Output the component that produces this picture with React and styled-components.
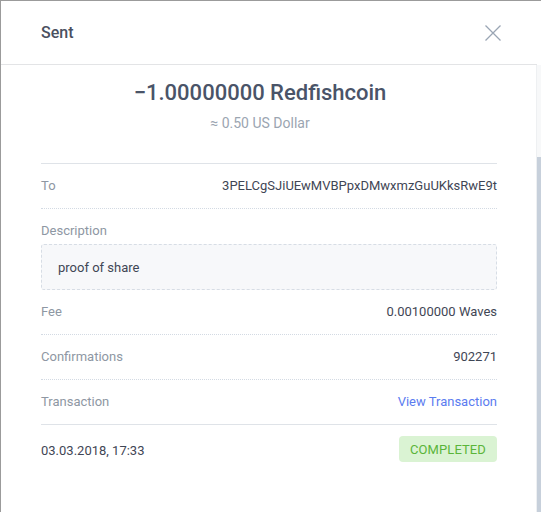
import React from "react";
import styled, { createGlobalStyle } from "styled-components";

const GlobalStyle = createGlobalStyle`
  html, body {
    margin: 0;
    padding: 0;
    background: #ffffff;
  }
  body {
    font-family: Roboto, "Liberation Sans", sans-serif;
  }
`;

const rows = [
  { label: "Fee", value: "0.00100000 Waves" },
  { label: "Confirmations", value: "902271" },
];

const App = () => {
  return (
    <>
      <GlobalStyle />
      <Modal>
        <Header>
          <Title>Sent</Title>
          <CloseButton aria-label='close'>
            <svg width='16' height='16' viewBox='0 0 16 16' fill='none'>
              <path
                d='M0.5 0.5L15.5 15.5M15.5 0.5L0.5 15.5'
                stroke='#9aa5b4'
                strokeWidth='1.3'
              />
            </svg>
          </CloseButton>
        </Header>
        <Body>
          <Content>
            <Amount>
              <div className='sum'>−1.00000000 Redfishcoin</div>
              <div className='fiat'>≈ 0.50 US Dollar</div>
            </Amount>
            <Row $line='dotted'>
              <Label>To</Label>
              <Value>3PELCgSJiUEwMVBPpxDMwxmzGuUKksRwE9t</Value>
            </Row>
            <Description>
              <Label>Description</Label>
              <DescBox>proof of share</DescBox>
            </Description>
            {rows.map((r) => (
              <Row key={r.label} $line='dotted'>
                <Label>{r.label}</Label>
                <Value>{r.value}</Value>
              </Row>
            ))}
            <Row $line='solid'>
              <Label>Transaction</Label>
              <Link href='#'>View Transaction</Link>
            </Row>
            <Footer>
              <Value>03.03.2018, 17:33</Value>
              <Badge>Completed</Badge>
            </Footer>
          </Content>
          <Scrollbar>
            <div className='thumb' />
          </Scrollbar>
        </Body>
      </Modal>
    </>
  );
};

const Modal = styled.div`
  height: 512px;
  box-sizing: border-box;
  border-left: 1px solid #9b9b9b;
  border-top: 1px solid #9b9b9b;
  display: flex;
  flex-direction: column;
  background: #fff;
  overflow: hidden;
`;

const Header = styled.div`
  height: 63px;
  flex-shrink: 0;
  display: flex;
  align-items: center;
  justify-content: space-between;
  padding: 0 40px;
  border-bottom: 1px solid #e3e4e6;
  margin-right: 4px;
`;

const Title = styled.div`
  font-size: 16px;
  font-weight: 500;
  color: #4a5060;
`;

const CloseButton = styled.div`
  width: 16px;
  height: 16px;
  margin-right: -4px;
  display: flex;
`;

const Body = styled.div`
  flex: 1;
  display: flex;
  min-height: 0;
`;

const Content = styled.div`
  flex: 1;
  padding: 0 39px 0 40px;
`;

const Scrollbar = styled.div`
  width: 5px;
  background: #f7f8f9;
  border-left: 1px solid #eef0f2;
  box-sizing: border-box;
  position: relative;
  .thumb {
    position: absolute;
    top: 92px;
    bottom: 0;
    left: 0;
    right: 0;
    background: #c7d0db;
  }
`;

const Amount = styled.div`
  text-align: center;
  padding-top: 14px;
  padding-right: 18px;
  height: 84px;
  border-bottom: 1px solid #dfe3e8;
  .sum {
    font-size: 22px;
    font-weight: 500;
    color: #4a5468;
    line-height: 28px;
  }
  .fiat {
    margin-top: 7px;
    font-size: 14px;
    color: #9ba5b1;
    line-height: 18px;
  }
`;

const Row = styled.div`
  height: 44px;
  display: flex;
  align-items: center;
  justify-content: space-between;
  border-bottom: 1px ${(p) => p.$line} ${(p) => (p.$line === "solid" ? "#dfe3e8" : "#d3dae3")};
  font-size: 13px;
`;

const Label = styled.div`
  font-size: 13px;
  color: #8e97a3;
  line-height: 16px;
`;

const Value = styled.div`
  font-size: 13px;
  color: #3f4655;
  line-height: 16px;
`;

const Link = styled.a`
  font-size: 13px;
  color: #5b7cf0;
  text-decoration: none;
  line-height: 16px;
`;

const Description = styled.div`
  padding-top: 14px;
  display: flex;
  flex-direction: column;
  gap: 5px;
`;

const DescBox = styled.div`
  height: 44px;
  box-sizing: content-box;
  border: 1px dashed #d7dde5;
  border-radius: 3px;
  background: #f7f8fa;
  padding: 0 16px;
  display: flex;
  align-items: center;
  font-size: 13px;
  color: #3f4655;
`;

const Footer = styled.div`
  display: flex;
  align-items: center;
  justify-content: space-between;
  padding-top: 11px;
  ${Value} {
    margin-top: 4px;
  }
`;

const Badge = styled.div`
  height: 26px;
  display: flex;
  align-items: center;
  padding: 0 11px;
  border-radius: 4px;
  background: #daf3d3;
  color: #5ab53a;
  font-size: 13px;
  text-transform: uppercase;
  letter-spacing: 0.1px;
`;

export default App;
